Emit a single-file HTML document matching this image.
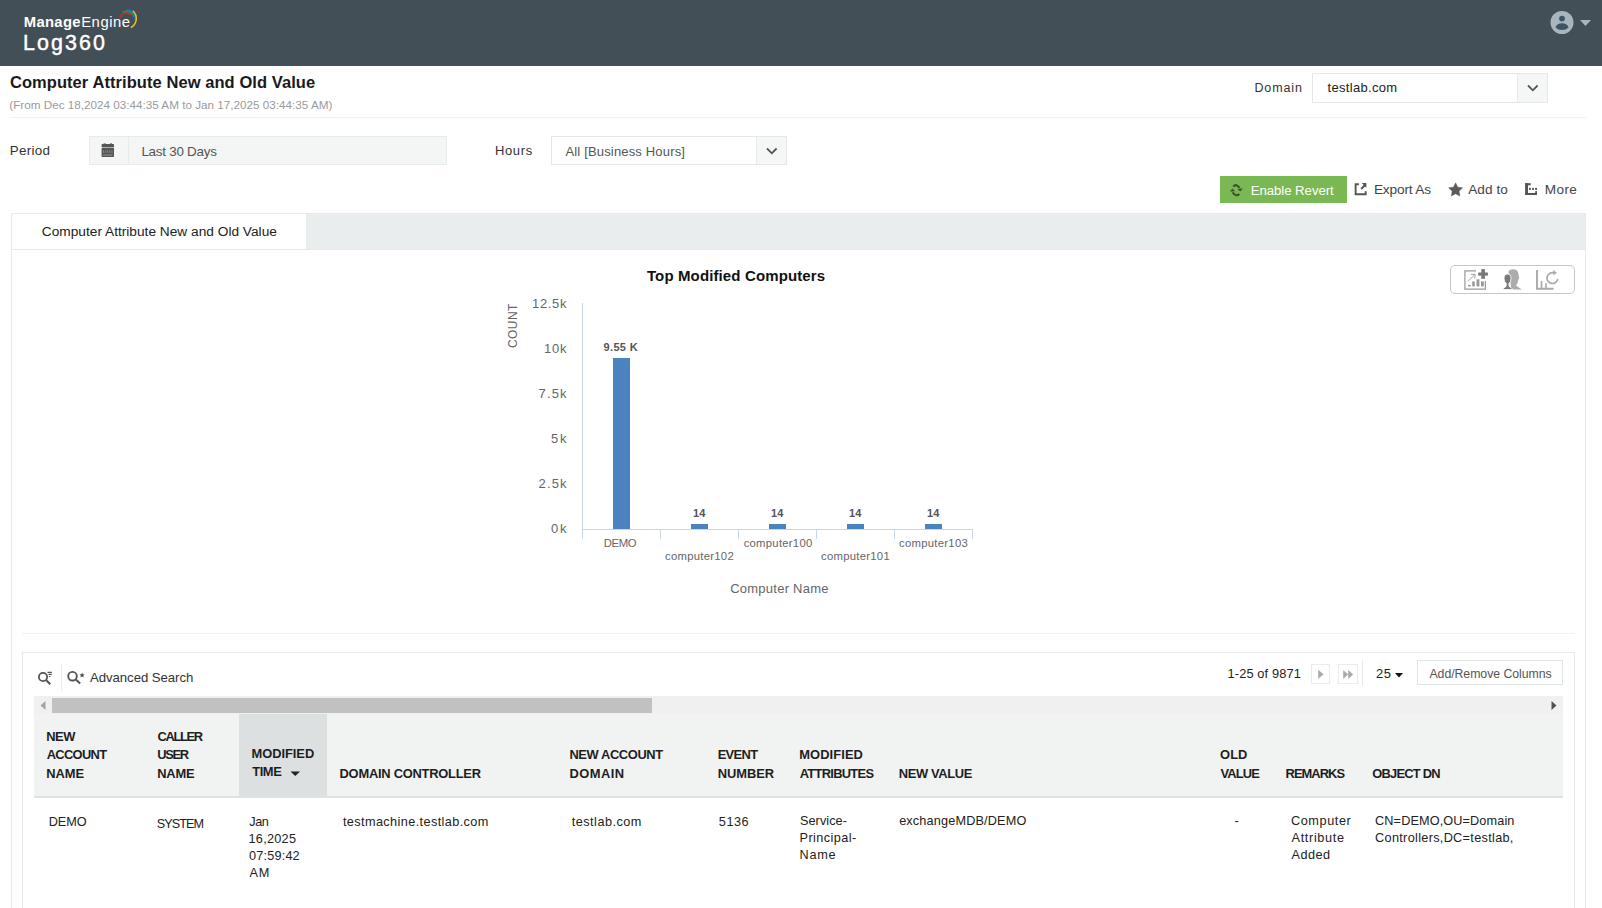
<!DOCTYPE html>
<html><head><meta charset="utf-8"><title>Log360</title>
<style>
html,body{margin:0;padding:0;background:#fff;width:1602px;height:908px;overflow:hidden;position:relative;font-family:"Liberation Sans",sans-serif;}
.t{position:absolute;white-space:nowrap;}
.r{position:absolute;box-sizing:border-box;}
svg.r{overflow:visible}
</style></head><body>
<div class="r" style="left:0px;top:0px;width:1602px;height:66px;background:#434f57;"></div>
<div class="t" style="left:23.73px;top:15px;font-size:14.8px;line-height:14.8px;color:#fff;font-weight:700;letter-spacing:0.336px;">Manage</div>
<div class="t" style="left:81.20px;top:15px;font-size:14.8px;line-height:14.8px;color:#fff;letter-spacing:0.554px;">Engine</div>
<svg class="r" style="left:112px;top:4px;width:30px;height:26px" viewBox="0 0 30 26"><path d="M8.20 13.45 A6 6 0 0 1 18.60 11.14" stroke="#d9262c" stroke-width="1.5" fill="none"/><path d="M10.37 8.39 A7.8 7.8 0 0 1 21.96 12.72" stroke="#1e9a48" stroke-width="1.5" fill="none"/><path d="M15.13 5.77 A9.3 9.3 0 0 1 23.25 15.97" stroke="#2a72c9" stroke-width="1.5" fill="none"/><path d="M20.76 6.73 A10.3 10.3 0 0 1 18.84 23.59" stroke="#f2c012" stroke-width="1.5" fill="none"/></svg>
<div class="t" style="left:22.97px;top:33px;font-size:21.4px;line-height:21.4px;color:#fff;letter-spacing:2.122px;-webkit-text-stroke:0.45px #fff;">Log360</div>
<svg class="r" style="left:1550px;top:11px;width:24px;height:24px" viewBox="0 0 24 24"><circle cx="12" cy="11.5" r="11.5" fill="#a9b5bd"/>
<circle cx="12" cy="7.6" r="2.9" fill="#3f5462"/>
<path d="M5.5 16.5 Q7 12.3 12 12.3 Q17 12.3 18.6 16.5 Q16 19 12 19 Q8 19 5.5 16.5Z" fill="#3f5462"/></svg>
<svg class="r" style="left:1580px;top:19px;width:12px;height:8px" viewBox="0 0 12 8"><path d="M0 1 L11 1 L5.5 7Z" fill="#a9b5bd"/></svg>
<div class="t" style="left:9.90px;top:74px;font-size:16.5px;line-height:16.5px;color:#1a1a1a;font-weight:700;letter-spacing:0.069px;">Computer Attribute New and Old Value</div>
<div class="t" style="left:9.28px;top:99px;font-size:11.7px;line-height:11.7px;color:#9b9b9b;letter-spacing:0.003px;">(From Dec 18,2024 03:44:35 AM to Jan 17,2025 03:44:35 AM)</div>
<div class="r" style="left:10px;top:117px;width:1576px;height:1px;background:#eef0f1;"></div>
<div class="t" style="left:1254.39px;top:82px;font-size:12.5px;line-height:12.5px;color:#333;letter-spacing:0.890px;">Domain</div>
<div class="r" style="left:1312px;top:73px;width:236px;height:30px;background:#fff;border:1px solid #e4e8ea;"></div>
<div class="r" style="left:1517px;top:74px;width:30px;height:28px;background:#f5f6f6;border-left:1px solid #e8ebec"></div>
<svg class="r" style="left:1527px;top:84px;width:12px;height:8px" viewBox="0 0 12 8"><path d="M1 1.5 L5.8 6.3 L10.6 1.5" stroke="#555" stroke-width="1.8" fill="none"/></svg>
<div class="t" style="left:1327.55px;top:81px;font-size:13px;line-height:13px;color:#222;letter-spacing:0.305px;">testlab.com</div>
<div class="t" style="left:9.72px;top:144px;font-size:13.4px;line-height:13.4px;color:#333;letter-spacing:0.320px;">Period</div>
<div class="r" style="left:89px;top:136px;width:358px;height:29px;background:#f4f5f5;border:1px solid #e8ebec;"></div>
<div class="r" style="left:128px;top:137px;width:1px;height:27px;background:#e8ebec;"></div>
<svg class="r" style="left:101px;top:143px;width:14px;height:15px" viewBox="0 0 14 15"><rect x="0.6" y="1" width="12.4" height="3.2" rx="0.8" fill="#555"/><rect x="2.6" y="0.4" width="2" height="1.2" fill="#555"/><rect x="9" y="0.4" width="2" height="1.2" fill="#555"/>
<rect x="0.6" y="4.8" width="12.4" height="9.1" rx="0.6" fill="#555"/>
<rect x="2.2" y="7.3" width="0.8" height="2.6" fill="#8f9499"/><rect x="4.3" y="7.3" width="0.8" height="2.6" fill="#8f9499"/><rect x="6.4" y="7.3" width="0.8" height="2.6" fill="#8f9499"/><rect x="8.5" y="7.3" width="0.8" height="2.6" fill="#8f9499"/><rect x="10.6" y="7.3" width="0.8" height="2.6" fill="#8f9499"/>
<rect x="2" y="11.6" width="9.6" height="0.9" fill="#94a3a0"/></svg>
<div class="t" style="left:141.42px;top:145px;font-size:13.4px;line-height:13.4px;color:#555;letter-spacing:-0.249px;">Last 30 Days</div>
<div class="t" style="left:494.95px;top:144px;font-size:13px;line-height:13px;color:#333;letter-spacing:0.650px;">Hours</div>
<div class="r" style="left:551px;top:136px;width:236px;height:29px;background:#fff;border:1px solid #e4e8ea;"></div>
<div class="r" style="left:756px;top:137px;width:30px;height:27px;background:#f5f6f6;border-left:1px solid #e8ebec"></div>
<svg class="r" style="left:766px;top:147px;width:12px;height:8px" viewBox="0 0 12 8"><path d="M1 1.5 L5.8 6.3 L10.6 1.5" stroke="#555" stroke-width="1.8" fill="none"/></svg>
<div class="t" style="left:565.45px;top:145px;font-size:13px;line-height:13px;color:#555;letter-spacing:0.166px;">All [Business Hours]</div>
<div class="r" style="left:1220px;top:176px;width:127px;height:27px;background:#79b852;"></div>
<svg class="r" style="left:1226px;top:180px;width:22px;height:20px" viewBox="0 0 22 20"><path d="M7.3 6.6 Q10.2 3.2 13.6 7.8" stroke="#3e4e35" stroke-width="2.1" fill="none"/>
<path d="M11.6 8.9 L16.9 8.4 L14.2 11.6Z" fill="#3e4e35"/>
<path d="M13.3 14 Q10.2 17.2 6.6 12.4" stroke="#3e4e35" stroke-width="2.1" fill="none"/>
<path d="M3.9 11.4 L9.1 11.2 L6.4 8.5Z" fill="#3e4e35"/></svg>
<div class="t" style="left:1250.63px;top:184px;font-size:13.2px;line-height:13.2px;color:#fff;letter-spacing:-0.037px;">Enable Revert</div>
<svg class="r" style="left:1350px;top:178px;width:22px;height:22px" viewBox="0 0 22 22"><path d="M8.9 6.2 H5.6 V16.2 H15.7 V13.2" stroke="#555" stroke-width="1.9" fill="none"/>
<path d="M11.2 11 L15 7" stroke="#555" stroke-width="1.9"/><path d="M11.8 5.1 H16.4 V9.9Z" fill="#555"/></svg>
<div class="t" style="left:1373.89px;top:183px;font-size:13.7px;line-height:13.7px;color:#444;letter-spacing:-0.171px;">Export As</div>
<svg class="r" style="left:1444px;top:178px;width:22px;height:22px" viewBox="0 0 22 22"><path d="M11.60 4.80 L13.72 9.19 L18.54 9.84 L15.02 13.21 L15.89 18.01 L11.60 15.70 L7.31 18.01 L8.18 13.21 L4.66 9.84 L9.48 9.19Z" fill="#5a5a5a" stroke="#5a5a5a" stroke-width="0.5" stroke-linejoin="round"/></svg>
<div class="t" style="left:1468.15px;top:183px;font-size:13.6px;line-height:13.6px;color:#444;letter-spacing:0.098px;">Add to</div>
<svg class="r" style="left:1520px;top:178px;width:22px;height:22px" viewBox="0 0 22 22"><rect x="5.1" y="5.2" width="2.9" height="11.8" fill="#555"/><rect x="5.1" y="5.2" width="5.6" height="2.1" fill="#555"/>
<rect x="5.1" y="15" width="11.9" height="2" fill="#555"/><rect x="15.2" y="13.1" width="1.8" height="3.9" fill="#555"/>
<rect x="9" y="9.7" width="1.8" height="2.2" rx="0.5" fill="#555"/><rect x="12.1" y="9.7" width="1.8" height="2.2" rx="0.5" fill="#555"/><rect x="15.2" y="9.7" width="1.8" height="2.2" rx="0.5" fill="#555"/></svg>
<div class="t" style="left:1544.70px;top:183px;font-size:13.6px;line-height:13.6px;color:#444;letter-spacing:0.403px;">More</div>
<div class="r" style="left:11px;top:213px;width:1575px;height:717px;background:#fff;border:1px solid #e6eaeb;"></div>
<div class="r" style="left:11px;top:213px;width:1575px;height:37px;background:#e9edee;border:1px solid #e6eaeb;"></div>
<div class="r" style="left:12px;top:214px;width:294px;height:35px;background:#fff;"></div>
<div class="t" style="left:41.81px;top:225px;font-size:13.7px;line-height:13.7px;color:#222;letter-spacing:0.007px;">Computer Attribute New and Old Value</div>
<div class="t" style="left:646.93px;top:268px;font-size:15px;line-height:15px;color:#111;font-weight:700;letter-spacing:0.126px;">Top Modified Computers</div>
<div class="r" style="left:1450px;top:265px;width:125px;height:29px;background:#fff;border:1px solid #c6c6c6;border-radius:5px"></div>
<svg class="r" style="left:1460px;top:266px;width:32px;height:28px" viewBox="0 0 32 28"><path d="M4.9 4.8 H16 M4.9 4.2 V23.2 H25.4 V15" stroke="#999" stroke-width="1.2" fill="none"/>
<path d="M8.1 15 L14.3 9.2" stroke="#999" stroke-width="0.9"/><path d="M11 8.4 L15.2 8.4 L14.8 12.6" stroke="#999" stroke-width="0.9" fill="none"/>
<rect x="8" y="19" width="2.8" height="1.4" fill="#999"/><rect x="12.2" y="15.4" width="2.6" height="5" fill="#999"/><rect x="16.5" y="13.3" width="2.9" height="7.1" fill="#999"/><rect x="21" y="15.4" width="2.8" height="5" fill="#999"/>
<rect x="21.3" y="3.1" width="3.6" height="9.7" fill="#787878"/><rect x="18.2" y="6.5" width="9.7" height="3.1" fill="#787878"/></svg>
<svg class="r" style="left:1496px;top:266px;width:32px;height:28px" viewBox="0 0 32 28"><path d="M12.5 6 Q13 3.2 17.5 3.2 Q22.5 3.2 22.6 9.5 L23.4 12.5 L22.5 13 Q22 17 20 19.5 Q23 21.5 25.8 23.6 L14 23.6 Q15.5 20 14.5 17 Z" fill="#acacac"/>
<path d="M6.2 23.6 Q8 21.5 10 20.5 L10.3 17.5 Q8 16 8 12.5 Q8 8 11.5 8 Q15 8 15 12.5 Q15 16 13 17.5 L13.2 20.5 Q15.5 21.5 17 23.6 Z" fill="#7a7a7a" stroke="#fff" stroke-width="0.9"/></svg>
<svg class="r" style="left:1532px;top:266px;width:32px;height:28px" viewBox="0 0 32 28"><path d="M5 4 V22.8 H21.6" stroke="#aaa" stroke-width="1.9" fill="none"/>
<rect x="8.7" y="15" width="1.6" height="7" fill="#aaa"/><rect x="13.2" y="17.2" width="1.6" height="5" fill="#aaa"/>
<path d="M21.8 6.9 A5.4 5.4 0 1 0 25.7 12.8" stroke="#aaa" stroke-width="1.7" fill="none"/><path d="M21.3 4 L24.9 6.8 L21.3 9.5Z" fill="#aaa"/></svg>
<div class="t" style="left:532.00px;top:297px;font-size:13px;line-height:13px;color:#666;letter-spacing:0.675px;">12.5k</div>
<div class="t" style="left:544.00px;top:342px;font-size:13px;line-height:13px;color:#666;letter-spacing:0.775px;">10k</div>
<div class="t" style="left:538.55px;top:387px;font-size:13px;line-height:13px;color:#666;letter-spacing:1.133px;">7.5k</div>
<div class="t" style="left:550.95px;top:432px;font-size:13px;line-height:13px;color:#666;letter-spacing:1.800px;">5k</div>
<div class="t" style="left:538.55px;top:477px;font-size:13px;line-height:13px;color:#666;letter-spacing:1.133px;">2.5k</div>
<div class="t" style="left:551.00px;top:522px;font-size:13px;line-height:13px;color:#666;letter-spacing:1.750px;">0k</div>
<div class="t" style="left:-0.60px;top:-10px;font-size:12px;line-height:12px;color:#666;letter-spacing:0.421px;transform-origin:0 0;transform:translate(507px,348px) rotate(-90deg);left:0;top:0;">COUNT</div>
<div class="r" style="left:582px;top:303px;width:1px;height:236px;background:#c8d6e5;"></div>
<div class="r" style="left:582px;top:529px;width:391px;height:1px;background:#c8d6e5;"></div>
<div class="r" style="left:660px;top:529px;width:1px;height:10px;background:#c8d6e5;"></div>
<div class="r" style="left:738px;top:529px;width:1px;height:10px;background:#c8d6e5;"></div>
<div class="r" style="left:816px;top:529px;width:1px;height:10px;background:#c8d6e5;"></div>
<div class="r" style="left:894px;top:529px;width:1px;height:10px;background:#c8d6e5;"></div>
<div class="r" style="left:972px;top:529px;width:1px;height:10px;background:#c8d6e5;"></div>
<div class="r" style="left:613px;top:358px;width:17px;height:171px;background:#4a83bd;"></div>
<div class="r" style="left:691px;top:524px;width:17px;height:5px;background:#4a83bd;"></div>
<div class="r" style="left:769px;top:524px;width:17px;height:5px;background:#4a83bd;"></div>
<div class="r" style="left:847px;top:524px;width:17px;height:5px;background:#4a83bd;"></div>
<div class="r" style="left:925px;top:524px;width:17px;height:5px;background:#4a83bd;"></div>
<div class="t" style="left:603.62px;top:342px;font-size:11px;line-height:11px;color:#555;font-weight:700;letter-spacing:0.320px;">9.55 K</div>
<div class="t" style="left:693.07px;top:508px;font-size:11px;line-height:11px;color:#555;font-weight:700;">14</div>
<div class="t" style="left:771.07px;top:508px;font-size:11px;line-height:11px;color:#555;font-weight:700;">14</div>
<div class="t" style="left:849.07px;top:508px;font-size:11px;line-height:11px;color:#555;font-weight:700;">14</div>
<div class="t" style="left:927.07px;top:508px;font-size:11px;line-height:11px;color:#555;font-weight:700;">14</div>
<div class="t" style="left:603.64px;top:538px;font-size:11.3px;line-height:11.3px;color:#666;letter-spacing:-0.322px;">DEMO</div>
<div class="t" style="left:664.97px;top:551px;font-size:11.3px;line-height:11.3px;color:#666;letter-spacing:0.277px;">computer102</div>
<div class="t" style="left:743.67px;top:538px;font-size:11.3px;line-height:11.3px;color:#666;letter-spacing:0.264px;">computer100</div>
<div class="t" style="left:820.97px;top:551px;font-size:11.3px;line-height:11.3px;color:#666;letter-spacing:0.277px;">computer101</div>
<div class="t" style="left:899.07px;top:538px;font-size:11.3px;line-height:11.3px;color:#666;letter-spacing:0.272px;">computer103</div>
<div class="t" style="left:730.15px;top:582px;font-size:13px;line-height:13px;color:#666;letter-spacing:0.254px;">Computer Name</div>
<div class="r" style="left:22px;top:633px;width:1552px;height:1px;background:#f0f2f3;"></div>
<div class="r" style="left:22px;top:652px;width:1553px;height:278px;background:#fff;border:1px solid #e6eaeb;"></div>
<svg class="r" style="left:34px;top:666px;width:20px;height:24px" viewBox="0 0 20 24"><circle cx="9" cy="11" r="4.1" stroke="#555" stroke-width="1.8" fill="none"/><path d="M12.3 14.3 L16.3 18.3" stroke="#555" stroke-width="2"/>
<path d="M13.5 6.4 H17.8 M14.5 8.4 H17.8 M14.9 10.5 H16.4" stroke="#555" stroke-width="1.1"/></svg>
<div class="r" style="left:61px;top:664px;width:1px;height:27px;background:#e8ecee;"></div>
<svg class="r" style="left:34px;top:666px;width:20px;height:24px" viewBox="0 0 20 24"><circle cx="38.5" cy="10.2" r="4.3" stroke="#555" stroke-width="1.9" fill="none"/><path d="M41.8 13.5 L46.2 17.6" stroke="#555" stroke-width="2"/>
<path d="M48.10 6.60 L48.86 8.25 L50.67 8.47 L49.34 9.70 L49.69 11.48 L48.10 10.60 L46.51 11.48 L46.86 9.70 L45.53 8.47 L47.34 8.25Z" fill="#555"/></svg>
<div class="t" style="left:90.05px;top:671px;font-size:13.2px;line-height:13.2px;color:#333;letter-spacing:-0.065px;">Advanced Search</div>
<div class="t" style="left:1227.52px;top:668px;font-size:12.8px;line-height:12.8px;color:#222;letter-spacing:0.136px;">1-25 of 9871</div>
<div class="r" style="left:1311px;top:664px;width:19px;height:20px;background:#fff;border:1px solid #e9ecec;"></div>
<svg class="r" style="left:1317px;top:668px;width:7px;height:11px" viewBox="0 0 7 11"><path d="M1.2 1.7 L6.6 6.2 L1.2 10.8Z" fill="#a8abae"/></svg>
<div class="r" style="left:1338px;top:664px;width:20px;height:20px;background:#fff;border:1px solid #e9ecec;"></div>
<svg class="r" style="left:1342px;top:669px;width:12px;height:10px" viewBox="0 0 12 10"><path d="M1.2 1 L6.2 5.5 L1.2 10Z M6.2 1 L11.2 5.5 L6.2 10Z" fill="#a8abae"/></svg>
<div class="r" style="left:1362px;top:660px;width:1px;height:26px;background:#e8ebec;"></div>
<div class="t" style="left:1376.05px;top:667px;font-size:13px;line-height:13px;color:#222;letter-spacing:0.400px;">25</div>
<svg class="r" style="left:1395px;top:673px;width:9px;height:5px" viewBox="0 0 9 5"><path d="M0 0 L8 0 L4 4.5Z" fill="#111"/></svg>
<div class="r" style="left:1417px;top:660px;width:146px;height:25px;background:#fff;border:1px solid #dfe5e7;"></div>
<div class="t" style="left:1429.45px;top:668px;font-size:12.3px;line-height:12.3px;color:#555;letter-spacing:-0.051px;">Add/Remove Columns</div>
<div class="r" style="left:34px;top:696px;width:1529px;height:18px;background:#f0f0f0;"></div>
<div class="r" style="left:52px;top:698px;width:600px;height:15px;background:#c1c1c1;"></div>
<svg class="r" style="left:40px;top:701px;width:6px;height:9px" viewBox="0 0 6 9"><path d="M5.5 0 L0.5 4.5 L5.5 9Z" fill="#a3a3a3"/></svg>
<svg class="r" style="left:1551px;top:701px;width:6px;height:9px" viewBox="0 0 6 9"><path d="M0.5 0 L5.5 4.5 L0.5 9Z" fill="#505050"/></svg>
<div class="r" style="left:34px;top:714px;width:1529px;height:82px;background:#f1f2f2;"></div>
<div class="r" style="left:239px;top:714px;width:88px;height:82px;background:#dde0e1;"></div>
<div class="r" style="left:34px;top:796px;width:1529px;height:2px;background:#dfe2e3;"></div>
<div class="t" style="left:46.16px;top:731px;font-size:12.9px;line-height:12.9px;color:#1e1e1e;font-weight:700;letter-spacing:-0.362px;">NEW</div>
<div class="t" style="left:46.65px;top:749px;font-size:12.9px;line-height:12.9px;color:#1e1e1e;font-weight:700;letter-spacing:-0.667px;">ACCOUNT</div>
<div class="t" style="left:46.16px;top:768px;font-size:12.9px;line-height:12.9px;color:#1e1e1e;font-weight:700;letter-spacing:-0.039px;">NAME</div>
<div class="t" style="left:157.45px;top:731px;font-size:12.9px;line-height:12.9px;color:#1e1e1e;font-weight:700;letter-spacing:-1.340px;">CALLER</div>
<div class="t" style="left:157.21px;top:749px;font-size:12.9px;line-height:12.9px;color:#1e1e1e;font-weight:700;letter-spacing:-1.327px;">USER</div>
<div class="t" style="left:157.16px;top:768px;font-size:12.9px;line-height:12.9px;color:#1e1e1e;font-weight:700;letter-spacing:-0.139px;">NAME</div>
<div class="t" style="left:251.46px;top:748px;font-size:12.9px;line-height:12.9px;color:#1e1e1e;font-weight:700;letter-spacing:-0.039px;">MODIFIED</div>
<div class="t" style="left:252.15px;top:766px;font-size:12.9px;line-height:12.9px;color:#1e1e1e;font-weight:700;letter-spacing:-0.389px;">TIME</div>
<svg class="r" style="left:290px;top:771px;width:11px;height:5px" viewBox="0 0 11 5"><path d="M0.5 0.5 L10 0.5 L5.25 5Z" fill="#222"/></svg>
<div class="t" style="left:339.56px;top:768px;font-size:12.9px;line-height:12.9px;color:#1e1e1e;font-weight:700;letter-spacing:-0.246px;">DOMAIN CONTROLLER</div>
<div class="t" style="left:569.46px;top:749px;font-size:12.9px;line-height:12.9px;color:#1e1e1e;font-weight:700;letter-spacing:-0.400px;">NEW ACCOUNT</div>
<div class="t" style="left:569.46px;top:768px;font-size:12.9px;line-height:12.9px;color:#1e1e1e;font-weight:700;letter-spacing:0.458px;">DOMAIN</div>
<div class="t" style="left:717.66px;top:749px;font-size:12.9px;line-height:12.9px;color:#1e1e1e;font-weight:700;letter-spacing:-0.656px;">EVENT</div>
<div class="t" style="left:717.66px;top:768px;font-size:12.9px;line-height:12.9px;color:#1e1e1e;font-weight:700;letter-spacing:-0.014px;">NUMBER</div>
<div class="t" style="left:799.16px;top:749px;font-size:12.9px;line-height:12.9px;color:#1e1e1e;font-weight:700;letter-spacing:0.104px;">MODIFIED</div>
<div class="t" style="left:799.65px;top:768px;font-size:12.9px;line-height:12.9px;color:#1e1e1e;font-weight:700;letter-spacing:-0.698px;">ATTRIBUTES</div>
<div class="t" style="left:898.86px;top:768px;font-size:12.9px;line-height:12.9px;color:#1e1e1e;font-weight:700;letter-spacing:-0.359px;">NEW VALUE</div>
<div class="t" style="left:1220.05px;top:749px;font-size:12.9px;line-height:12.9px;color:#1e1e1e;font-weight:700;letter-spacing:0.076px;">OLD</div>
<div class="t" style="left:1220.50px;top:768px;font-size:12.9px;line-height:12.9px;color:#1e1e1e;font-weight:700;letter-spacing:-0.856px;">VALUE</div>
<div class="t" style="left:1285.56px;top:768px;font-size:12.9px;line-height:12.9px;color:#1e1e1e;font-weight:700;letter-spacing:-0.943px;">REMARKS</div>
<div class="t" style="left:1372.25px;top:768px;font-size:12.9px;line-height:12.9px;color:#1e1e1e;font-weight:700;letter-spacing:-0.779px;">OBJECT DN</div>
<div class="t" style="left:48.67px;top:816px;font-size:12.7px;line-height:12.7px;color:#222;letter-spacing:0.004px;">DEMO</div>
<div class="t" style="left:156.71px;top:818px;font-size:12.7px;line-height:12.7px;color:#222;letter-spacing:-0.941px;">SYSTEM</div>
<div class="t" style="left:249.30px;top:816px;font-size:12.7px;line-height:12.7px;color:#222;letter-spacing:-0.495px;">Jan</div>
<div class="t" style="left:248.52px;top:833px;font-size:12.7px;line-height:12.7px;color:#222;letter-spacing:0.266px;">16,2025</div>
<div class="t" style="left:249.01px;top:850px;font-size:12.7px;line-height:12.7px;color:#222;letter-spacing:0.184px;">07:59:42</div>
<div class="t" style="left:249.45px;top:867px;font-size:12.7px;line-height:12.7px;color:#222;letter-spacing:0.773px;">AM</div>
<div class="t" style="left:342.90px;top:816px;font-size:12.7px;line-height:12.7px;color:#222;letter-spacing:0.394px;">testmachine.testlab.com</div>
<div class="t" style="left:571.70px;top:816px;font-size:12.7px;line-height:12.7px;color:#222;letter-spacing:0.486px;">testlab.com</div>
<div class="t" style="left:718.86px;top:816px;font-size:12.7px;line-height:12.7px;color:#222;letter-spacing:0.481px;">5136</div>
<div class="t" style="left:800.01px;top:815px;font-size:12.7px;line-height:12.7px;color:#222;letter-spacing:0.053px;">Service-</div>
<div class="t" style="left:799.57px;top:832px;font-size:12.7px;line-height:12.7px;color:#222;letter-spacing:0.407px;">Principal-</div>
<div class="t" style="left:799.57px;top:849px;font-size:12.7px;line-height:12.7px;color:#222;letter-spacing:0.738px;">Name</div>
<div class="t" style="left:899.16px;top:815px;font-size:12.7px;line-height:12.7px;color:#222;letter-spacing:0.155px;">exchangeMDB/DEMO</div>
<div class="t" style="left:1234.56px;top:815px;font-size:12.7px;line-height:12.7px;color:#222;">-</div>
<div class="t" style="left:1290.96px;top:815px;font-size:12.7px;line-height:12.7px;color:#222;letter-spacing:0.585px;">Computer</div>
<div class="t" style="left:1291.55px;top:832px;font-size:12.7px;line-height:12.7px;color:#222;letter-spacing:0.650px;">Attribute</div>
<div class="t" style="left:1291.55px;top:849px;font-size:12.7px;line-height:12.7px;color:#222;letter-spacing:0.437px;">Added</div>
<div class="t" style="left:1375.07px;top:815px;font-size:12.7px;line-height:12.7px;color:#222;letter-spacing:0.114px;">CN=DEMO,OU=Domain</div>
<div class="t" style="left:1375.07px;top:832px;font-size:12.7px;line-height:12.7px;color:#222;letter-spacing:0.310px;">Controllers,DC=testlab,</div>
</body></html>
